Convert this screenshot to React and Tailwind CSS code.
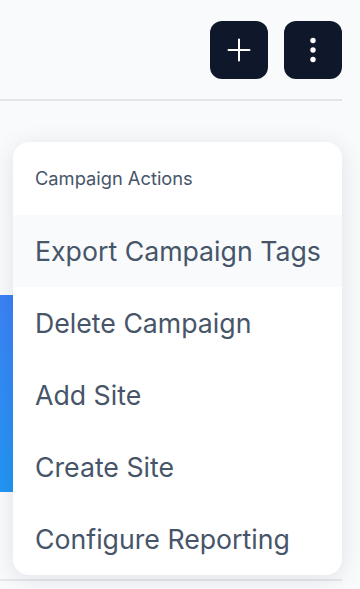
import React from 'react';

const actions = [
    'Export Campaign Tags',
    'Delete Campaign',
    'Add Site',
    'Create Site',
    'Configure Reporting',
];

const App = () => {
    return (
        <div className="relative h-[589px] w-[360px] overflow-hidden bg-[#f8fafc]" style={{ fontFamily: 'Inter, "Noto Sans", sans-serif' }}>
            {/* page header */}
            <div className="mr-[18px] flex h-[101px] items-start justify-end gap-4 border-b-2 border-[#e2e5ea] pt-[21px]">
                <button className="flex h-[58px] w-[58px] items-center justify-center rounded-[12px] bg-[#0f172a] text-white">
                    <svg width="24" height="24" viewBox="0 0 24 24" fill="none" stroke="currentColor" strokeWidth="2" strokeLinecap="round">
                        <path d="M12 1.5v21M1.5 12h21" />
                    </svg>
                </button>
                <button className="flex h-[58px] w-[58px] items-center justify-center rounded-[12px] bg-[#0f172a] text-white">
                    <svg width="28" height="28" viewBox="0 0 28 28" fill="currentColor">
                        <circle cx="14" cy="4.5" r="2.7" />
                        <circle cx="14" cy="14" r="2.7" />
                        <circle cx="14" cy="23.5" r="2.7" />
                    </svg>
                </button>
            </div>

            {/* page content behind the menu */}
            <div className="mr-[18px] pt-[194px]">
                <div className="h-[197px] rounded-r-lg bg-gradient-to-b from-[#3b82f6] to-[#2196f3]" />
                <div className="mt-[87px] h-[2px] bg-[#e5e7eb]" />
            </div>

            {/* dropdown menu */}
            <div className="absolute left-[13px] top-[142px] w-[329px] overflow-hidden rounded-[16px] bg-white shadow-[0_4px_24px_rgba(15,23,42,0.10)]">
                <div className="flex h-[73px] items-center whitespace-nowrap pl-[22px] text-[18.3px] text-[#475569]">
                    Campaign Actions
                </div>
                {actions.map((label, i) => (
                    <div
                        key={label}
                        className={`flex h-[72px] items-center whitespace-nowrap pl-[22px] text-[26.7px] text-[#475569] ${i === 0 ? 'bg-[#f8fafc]' : ''}`}
                    >
                        {label}
                    </div>
                ))}
            </div>
        </div>
    );
};

export default App;
